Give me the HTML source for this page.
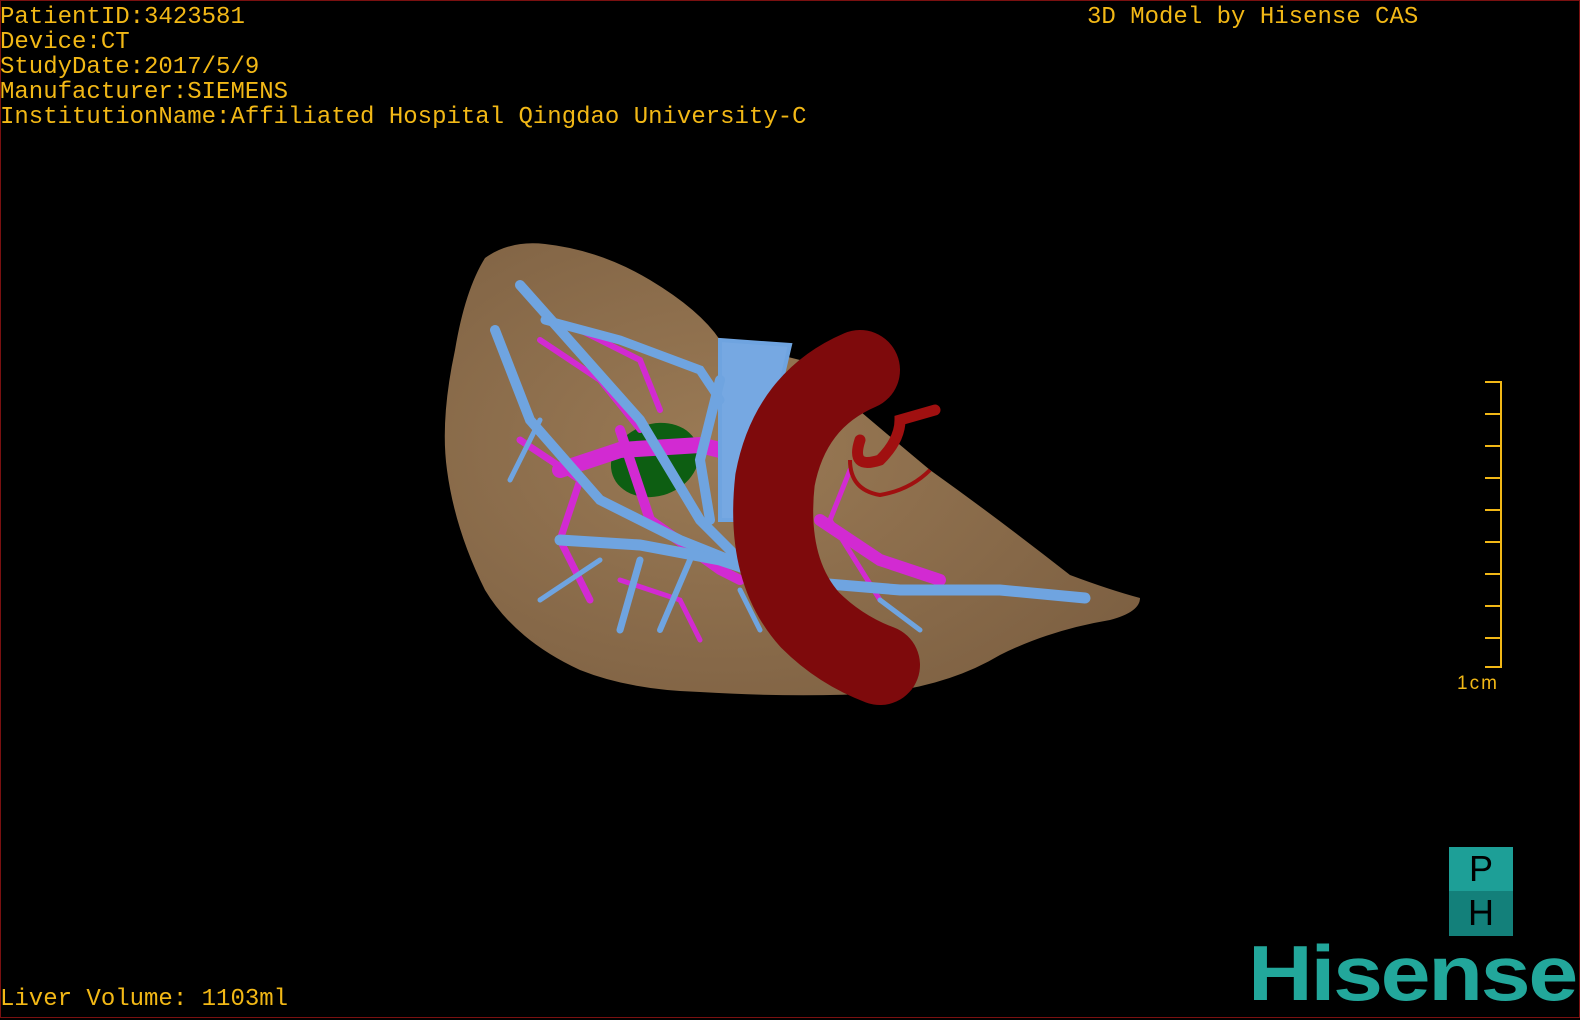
<!DOCTYPE html>
<html><head><meta charset="utf-8"><style>
html,body{margin:0;padding:0;background:#000;}
body{width:1580px;height:1020px;position:relative;overflow:hidden;}
.frame{position:absolute;left:0;top:0;width:1578px;height:1016px;border:1px solid #7a1010;}
.t{position:absolute;color:#f2b816;font-family:"Liberation Mono",monospace;font-size:24px;line-height:25px;white-space:pre;}
.logo{position:absolute;left:1248px;top:928px;color:#22a79b;font-family:"Liberation Sans",sans-serif;font-weight:bold;font-size:78px;line-height:90px;transform:scaleX(1.15);transform-origin:left top;letter-spacing:-2px;}
.ph{position:absolute;left:1449px;top:847px;width:64px;height:89px;}
.ph div{height:44px;color:#000;font-family:"Liberation Sans",sans-serif;font-size:36px;line-height:44px;text-align:center;}
</style></head><body>
<div class="frame"></div>
<div class="t" style="left:0;top:5px">PatientID:3423581
Device:CT
StudyDate:2017/5/9
Manufacturer:SIEMENS
InstitutionName:Affiliated Hospital Qingdao University-C</div>
<div class="t" style="left:1087px;top:5px">3D Model by Hisense CAS</div>
<div class="t" style="left:0;top:987px">Liver Volume: 1103ml</div>

<svg width="1580" height="1020" style="position:absolute;left:0;top:0">
<g stroke="#f2b816" stroke-width="2" fill="none">
<line x1="1501" y1="381" x2="1501" y2="668"/>
<line x1="1485" y1="382" x2="1501" y2="382"/><line x1="1485" y1="414" x2="1501" y2="414"/>
<line x1="1485" y1="446" x2="1501" y2="446"/><line x1="1485" y1="478" x2="1501" y2="478"/>
<line x1="1485" y1="510" x2="1501" y2="510"/><line x1="1485" y1="542" x2="1501" y2="542"/>
<line x1="1485" y1="574" x2="1501" y2="574"/><line x1="1485" y1="606" x2="1501" y2="606"/>
<line x1="1485" y1="638" x2="1501" y2="638"/><line x1="1485" y1="667" x2="1501" y2="667"/>
</g>
<text x="1457" y="689" fill="#f2b816" font-family="Liberation Sans" font-size="19" letter-spacing="2">1cm</text>
<defs><radialGradient id="lg" cx="0.4" cy="0.45" r="0.7"><stop offset="0" stop-color="#9a7a55"/><stop offset="1" stop-color="#7d6042"/></radialGradient></defs>
<path d="M485 258 Q510 240 545 244 Q600 250 650 280 Q700 310 720 340 L800 360 Q870 420 930 470 Q1000 520 1070 575 Q1110 590 1140 598 Q1140 612 1110 620 Q1050 630 1000 655 Q950 685 880 693 Q800 698 700 692 Q630 690 580 670 Q515 640 485 590 Q455 530 447 470 Q440 420 455 350 Q465 290 485 258 Z" fill="url(#lg)"/>
<ellipse cx="655" cy="460" rx="45" ry="36" fill="#0d5e12" transform="rotate(-20 655 460)"/>
<g stroke="#d22ad2" fill="none" stroke-linecap="round">
<path d="M560 470 L620 450 L700 445 L760 460" stroke-width="16"/>
<path d="M620 430 L650 520 L720 570 L740 580" stroke-width="10"/>
<path d="M540 340 L600 380 L640 430" stroke-width="6"/>
<path d="M580 330 L640 360 L660 410" stroke-width="6"/>
<path d="M520 440 L580 480 L560 540 L590 600" stroke-width="7"/>
<path d="M620 580 L680 600 L700 640" stroke-width="5"/>
<path d="M820 520 L880 560 L940 580" stroke-width="12"/>
<path d="M850 470 L830 520 L880 600" stroke-width="5"/>
<path d="M760 400 L810 390" stroke-width="14"/>
</g>
<g stroke="#6fa4e0" fill="none" stroke-linecap="round">
<path d="M720 340 L790 345 L770 430 L745 520 L720 520 Z" fill="#76a8e2" stroke-width="4"/>
<path d="M520 285 L560 330 L640 420 L700 520 L740 560" stroke-width="10"/>
<path d="M545 320 L620 340 L700 370 L720 400" stroke-width="9"/>
<path d="M495 330 L530 420 L600 500 L680 540 L730 560" stroke-width="10"/>
<path d="M560 540 L640 545 L720 560 L780 580 L900 590 L1000 590 L1085 598" stroke-width="11"/>
<path d="M640 560 L620 630" stroke-width="7"/>
<path d="M690 560 L660 630" stroke-width="6"/>
<path d="M720 380 L700 460 L710 520" stroke-width="10"/>
<path d="M540 420 L510 480" stroke-width="5"/>
<path d="M600 560 L540 600" stroke-width="5"/>
<path d="M880 600 L920 630" stroke-width="5"/>
<path d="M740 590 L760 630" stroke-width="5"/>
</g>
<path d="M860 370 Q790 400 775 480 Q765 570 810 620 Q840 650 880 665" stroke="#7e0a0c" stroke-width="80" fill="none" stroke-linecap="round"/>
<path d="M860 440 Q850 470 880 460 Q900 440 900 420 L935 410" stroke="#a01010" stroke-width="11" fill="none" stroke-linecap="round"/>
<path d="M850 460 Q850 490 880 495 Q910 490 930 470" stroke="#a01010" stroke-width="4" fill="none"/>
</svg>

<div class="ph"><div style="background:#1d9f97">P</div><div style="background:#13807a;height:45px">H</div></div>
<div class="logo">Hisense</div>
</body></html>
